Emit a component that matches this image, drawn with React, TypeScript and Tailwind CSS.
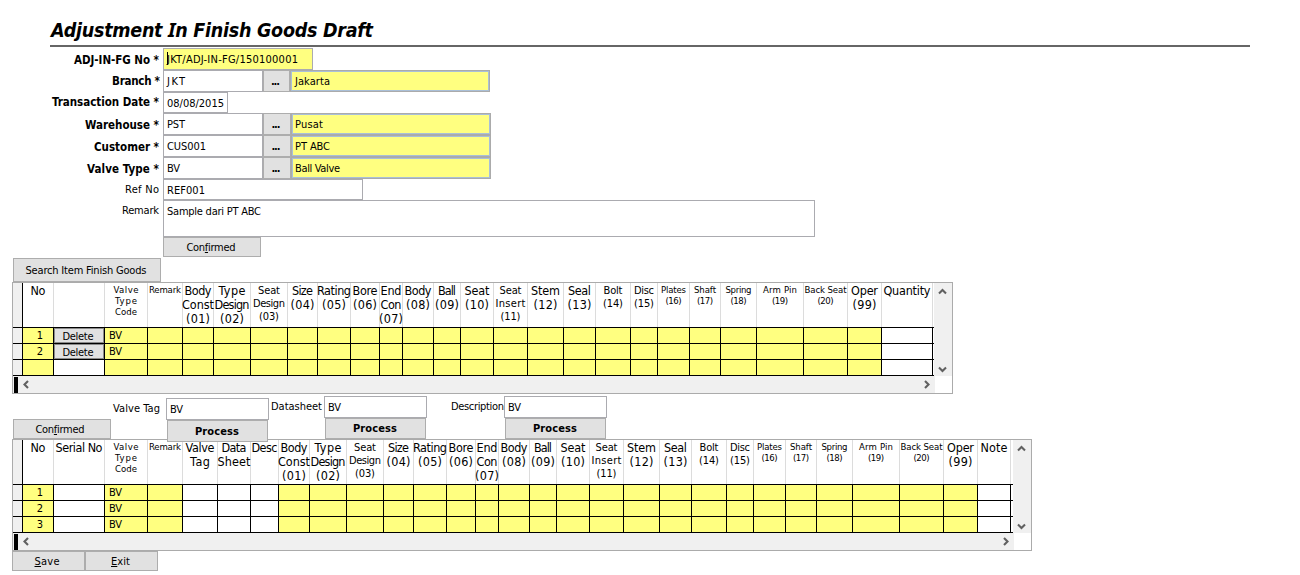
import { useLayoutEffect, useRef, type ReactNode } from "react";

/** A line of text whose tracking is tuned so that it fills `w` pixels. */
function Fit({ w, children, className = "" }: { w: number; children: ReactNode; className?: string }) {
  const ref = useRef<HTMLSpanElement>(null);
  useLayoutEffect(() => {
    const el = ref.current;
    if (!el) return;
    el.style.letterSpacing = "0px";
    const n = (el.textContent ?? "").length;
    const gap = n > 1 ? (w - el.getBoundingClientRect().width) / (n - 1) : 0;
    el.style.letterSpacing = `${gap}px`;
    el.style.marginRight = `${-gap}px`;
  }, [w]);
  return (
    <span ref={ref} className={`inline-block shrink-0 whitespace-pre ${className}`}>
      {children}
    </span>
  );
}

type Line = [string, number];
type Size = "lg" | "md" | "sm";
type Column = { end: number; size?: Size; head?: Line[]; kind?: "no" | "delete" | "code" | "white" };

const sizes: Record<Size, string> = {
  lg: "pt-px text-[12.5px] leading-[14px]",
  md: "pt-px text-[11px] leading-[13px]",
  sm: "pt-px text-[9.5px] leading-[11px]",
};

const specs: Omit<Column, "end">[] = [
  { head: [["Body", 27], ["Const", 32], ["(01)", 24]] },
  { head: [["Type", 27], ["Design", 35], ["(02)", 24]] },
  { size: "md", head: [["Seat", 22], ["Design", 32], ["(03)", 20]] },
  { head: [["Size", 21], ["(04)", 24]] },
  { head: [["Rating", 34], ["(05)", 24]] },
  { head: [["Bore", 25], ["(06)", 24]] },
  { head: [["End", 21], ["Con", 21], ["(07)", 24]] },
  { head: [["Body", 27], ["(08)", 24]] },
  { head: [["Ball", 18], ["(09)", 24]] },
  { head: [["Seat", 25], ["(10)", 24]] },
  { size: "md", head: [["Seat", 22], ["Insert", 30], ["(11)", 20]] },
  { head: [["Stem", 29], ["(12)", 24]] },
  { head: [["Seal", 23], ["(13)", 24]] },
  { size: "md", head: [["Bolt", 19], ["(14)", 20]] },
  { size: "md", head: [["Disc", 20], ["(15)", 20]] },
  { size: "sm", head: [["Plates", 25], ["(16)", 16]] },
  { size: "sm", head: [["Shaft", 22], ["(17)", 16]] },
  { size: "sm", head: [["Spring", 26], ["(18)", 16]] },
  { size: "sm", head: [["Arm Pin", 34], ["(19)", 16]] },
  { size: "sm", head: [["Back Seat", 42], ["(20)", 16]] },
  { head: [["Oper", 27], ["(99)", 24]] },
];

const withEnds = (ends: number[]): Column[] => specs.map((s, i) => ({ ...s, end: ends[i] }));

const valveCode: Column = { end: 104, size: "sm", kind: "code", head: [["Valve", 25], ["Type", 22], ["Code", 22]] };
const remark: Column = { end: 182, size: "sm", head: [["Remark", 32]] };

const itemColumns: Column[] = [
  { end: 53, kind: "no", head: [["No", 15]] },
  { end: 104, kind: "delete" },
  { ...valveCode, end: 147 },
  remark,
  ...withEnds([213, 250, 287, 317, 350, 379, 402, 433, 460, 493, 527, 563, 595, 630, 657, 689, 720, 756, 803, 847, 881]),
  { end: 932, kind: "white", head: [["Quantity", 47]] },
];

const serialColumns: Column[] = [
  { end: 53, kind: "no", head: [["No", 15]] },
  { end: 104, kind: "white", head: [["Serial No", 47]] },
  { ...valveCode, end: 147 },
  remark,
  { end: 217, kind: "white", head: [["Valve", 29], ["Tag", 20]] },
  { end: 250, kind: "white", head: [["Data", 25], ["Sheet", 33]] },
  { end: 278, kind: "white", head: [["Desc", 26]] },
  ...withEnds([309, 346, 383, 413, 446, 475, 498, 529, 556, 589, 623, 659, 691, 726, 753, 785, 816, 852, 899, 943, 977]),
  { end: 1010, kind: "white", head: [["Note", 27]] },
];

function Chevron({ d, className = "" }: { d: string; className?: string }) {
  return (
    <svg width="9" height="9" viewBox="0 0 9 9" fill="none" stroke="#606060" strokeWidth="2.1" className={className}>
      <path d={d} />
    </svg>
  );
}

const tpl = (cols: Column[]) => ["10px", ...cols.map((c, i) => `${c.end - (i ? cols[i - 1].end : 22)}px`), "1fr"].join(" ");

function Cell({ col, row }: { col: Column; row?: number }) {
  const white = col.kind === "white" || (col.kind === "delete" && !row);
  return (
    <div className={`flex h-4 overflow-hidden border-r border-b border-black text-[11px] leading-[15px] ${white ? "bg-white" : "bg-[#ffff80]"}`}>
      {col.kind === "no" && row && <span className="w-full pl-1 text-center">{row}</span>}
      {col.kind === "code" && row && <span className="pl-1"><Fit w={13}>BV</Fit></span>}
      {col.kind === "delete" && row && (
        <button className="flex h-[15px] w-full justify-center border border-[#8a8a8a] bg-[#e1e1e1] pr-[2px] leading-[15px]">
          <Fit w={31}>Delete</Fit>
        </button>
      )}
    </div>
  );
}

function DataGrid({ cols, rows, className }: { cols: Column[]; rows: (number | undefined)[]; className: string }) {
  const style = { gridTemplateColumns: tpl(cols) };
  return (
    <div className={`ml-3 h-28 border border-[#ababab] bg-white ${className}`}>
      <div className="flex">
        <div className="min-w-0 flex-1">
          <div className="grid h-[45px] border-b border-black" style={style}>
            <div className="border-r border-black bg-[#f0f0f0]" />
            {cols.map((c, i) => (
              <div key={i} className={`flex min-w-0 flex-col items-center border-r border-[#dcdcdc] ${sizes[c.size ?? "lg"]}`}>
                {c.head?.map(([t, w]) => <Fit key={t} w={w}>{t}</Fit>)}
              </div>
            ))}
            <div />
          </div>
          {rows.map((r, i) => (
            <div key={i} className="grid" style={style}>
              <div className="border-r border-b border-black bg-[#f0f0f0]" />
              {cols.map((c, j) => <Cell key={j} col={c} row={r} />)}
              <div className="border-b border-black" />
            </div>
          ))}
        </div>
        <div className="flex w-[18px] flex-col items-center justify-between bg-[#f0f0f0] pt-1 pr-px pb-[2px]">
          <Chevron d="M1 6.5 4.5 3 8 6.5" />
          <Chevron d="M1 2.5 4.5 6 8 2.5" />
        </div>
      </div>
      <div className="flex h-[17px]">
        <div className="flex flex-1 items-center justify-between bg-[#f0f0f0] pr-[4px] pl-px">
          <div className="flex items-center">
            <div className="h-4 w-1 bg-black" />
            <Chevron d="M6 1 2.5 4.5 6 8" className="ml-1" />
          </div>
          <Chevron d="M3 1 6.5 4.5 3 8" />
        </div>
        <div className="w-[17px]" />
      </div>
    </div>
  );
}

function Button({ className, children }: { className: string; children: ReactNode }) {
  return (
    <button className={`flex shrink-0 items-center justify-center border border-[#adadad] bg-[#e1e1e1] ${className}`}>
      {children}
    </button>
  );
}

function Field({ className, w, children }: { className: string; w: number; children: ReactNode }) {
  return (
    <div className={`shrink-0 border border-[#ababb0] pt-1 pl-[3px] ${className}`}>
      <Fit w={w}>{children}</Fit>
    </div>
  );
}

function Row({ label, w, bold = true, className, children }: { label: string; w: number; bold?: boolean; className: string; children: ReactNode }) {
  return (
    <div className={`flex ${className}`}>
      <div className={`flex w-[163px] shrink-0 justify-end pr-1 ${bold ? "text-[11.5px] font-bold" : ""}`}>
        <Fit w={w}>{label}</Fit>
      </div>
      {children}
    </div>
  );
}

function Lookup({ code, cw, name, nw, wide = true }: { code: string; cw: number; name: string; nw: number; wide?: boolean }) {
  return (
    <>
      <Field className="h-[22px] w-[100px] bg-white" w={cw}>{code}</Field>
      <Button className={`h-[22px] pr-[2px] font-bold ${wide ? "w-7" : "w-[27px]"}`}><Fit w={9}>...</Fit></Button>
      <div className="h-[22px] w-[200px] border border-[#ababab]">
        <div className={`h-5 border border-[#a9bfd8] bg-[#ffff80] pt-[3px] ${wide ? "pl-[2px]" : "pl-[3px]"}`}><Fit w={nw}>{name}</Fit></div>
      </div>
    </>
  );
}

function Filter({ label, w, labelClass, className, process }: { label: string; w: number; labelClass: string; className: string; process: string }) {
  return (
    <div className={`flex shrink-0 ${className}`}>
      <div className={`flex shrink-0 ${labelClass}`}><Fit w={w}>{label}</Fit></div>
      <div className="flex flex-col items-center">
        <Field className="h-[22px] w-[103px] bg-white" w={13}>BV</Field>
        <Button className={`relative z-10 w-[101px] pr-px font-bold ${process}`}><Fit w={44}>Process</Fit></Button>
      </div>
    </div>
  );
}

export default function App() {
  return (
    <main className="h-[575px] w-[1300px] overflow-hidden bg-white font-['DejaVu_Sans_Condensed','DejaVu_Sans',sans-serif] text-[11px] leading-[13px] text-black">
      <header className="ml-[50px] h-[47px] w-[1200px] border-b-2 border-[#666] pt-[18px] pl-px text-[19.5px] leading-6 font-bold italic">
        <Fit w={322}>Adjustment <span className="font-['Noto_Sans',sans-serif]">I</span>n Finish Goods Draft</Fit>
      </header>

      <section className="h-[211px] pt-px">
        <Row label="ADJ-IN-FG No *" w={85} className="h-[22px] *:first:pt-[6px]">
          <div className="flex h-[22px] w-[150px] border border-[#ababb0] bg-[#ffff80] pt-1 pl-[3px]">
            <div className="-mt-px -mr-px h-[13px] w-px bg-black" />
            <Fit w={131}>JKT/ADJ-IN-FG/150100001</Fit>
          </div>
        </Row>
        <Row label="Branch *" w={48} className="h-[22px] *:first:pt-[5px] *:first:pr-[3px]">
          <Lookup code="JKT" cw={18} name="Jakarta" nw={35} wide={false} />
        </Row>
        <Row label="Transaction Date *" w={107} className="h-[21px] *:first:pt-1">
          <Field className="h-[21px] w-[65px]" w={57}>08/08/2015</Field>
        </Row>
        <Row label="Warehouse *" w={74} className="h-[22px] *:first:pt-[6px]">
          <Lookup code="PST" cw={18} name="Pusat" nw={28} />
        </Row>
        <Row label="Customer *" w={65} className="h-[22px] *:first:pt-[6px]">
          <Lookup code="CUS001" cw={39} name="PT ABC" nw={35} />
        </Row>
        <Row label="Valve Type *" w={72} className="h-[22px] *:first:pt-[6px]">
          <Lookup code="BV" cw={13} name="Ball Valve" nw={45} />
        </Row>
        <Row label="Ref No" w={34} bold={false} className="h-[21px] *:first:pt-1">
          <Field className="h-[21px] w-[200px]" w={38}>REF001</Field>
        </Row>
        <Row label="Remark" w={37} bold={false} className="h-[37px] *:first:pt-1">
          <Field className="h-[37px] w-[652px]" w={94}>Sample dari PT ABC</Field>
        </Row>
        <Button className="ml-[163px] h-5 w-[98px] pr-[2px]"><Fit w={49}>Con<u>f</u>irmed</Fit></Button>
      </section>

      <Button className="ml-[13px] h-6 w-[148px] pr-[2px]"><Fit w={121}>Search Item Finish Goods</Fit></Button>
      <DataGrid cols={itemColumns} rows={[1, 2, undefined]} className="w-[941px]" />

      <section className="flex h-[45px] pl-[13px]">
        <Button className="mt-[25px] h-5 w-[98px] pr-[4px]"><Fit w={49}>Con<u>f</u>irmed</Fit></Button>
        <Filter label="Valve Tag" w={47} labelClass="w-[55px] pl-[2px] pt-1" className="pt-1" process="h-[22px]" />
        <Filter label="Datasheet" w={51} labelClass="w-[55px] pl-[2px] pt-1" className="pt-[2px]" process="h-[21px]" />
        <Filter label="Description" w={53} labelClass="w-[77px] justify-end pt-1" className="pt-[2px]" process="h-[21px]" />
      </section>

      <DataGrid cols={serialColumns} rows={[1, 2, 3]} className="w-[1020px]" />

      <footer className="ml-3 flex">
        <Button className="h-5 w-[73px] pr-[3px]"><Fit w={25}><u>S</u>ave</Fit></Button>
        <Button className="h-5 w-[73px] pr-[2px]"><Fit w={19}><u>E</u>xit</Fit></Button>
      </footer>
    </main>
  );
}
